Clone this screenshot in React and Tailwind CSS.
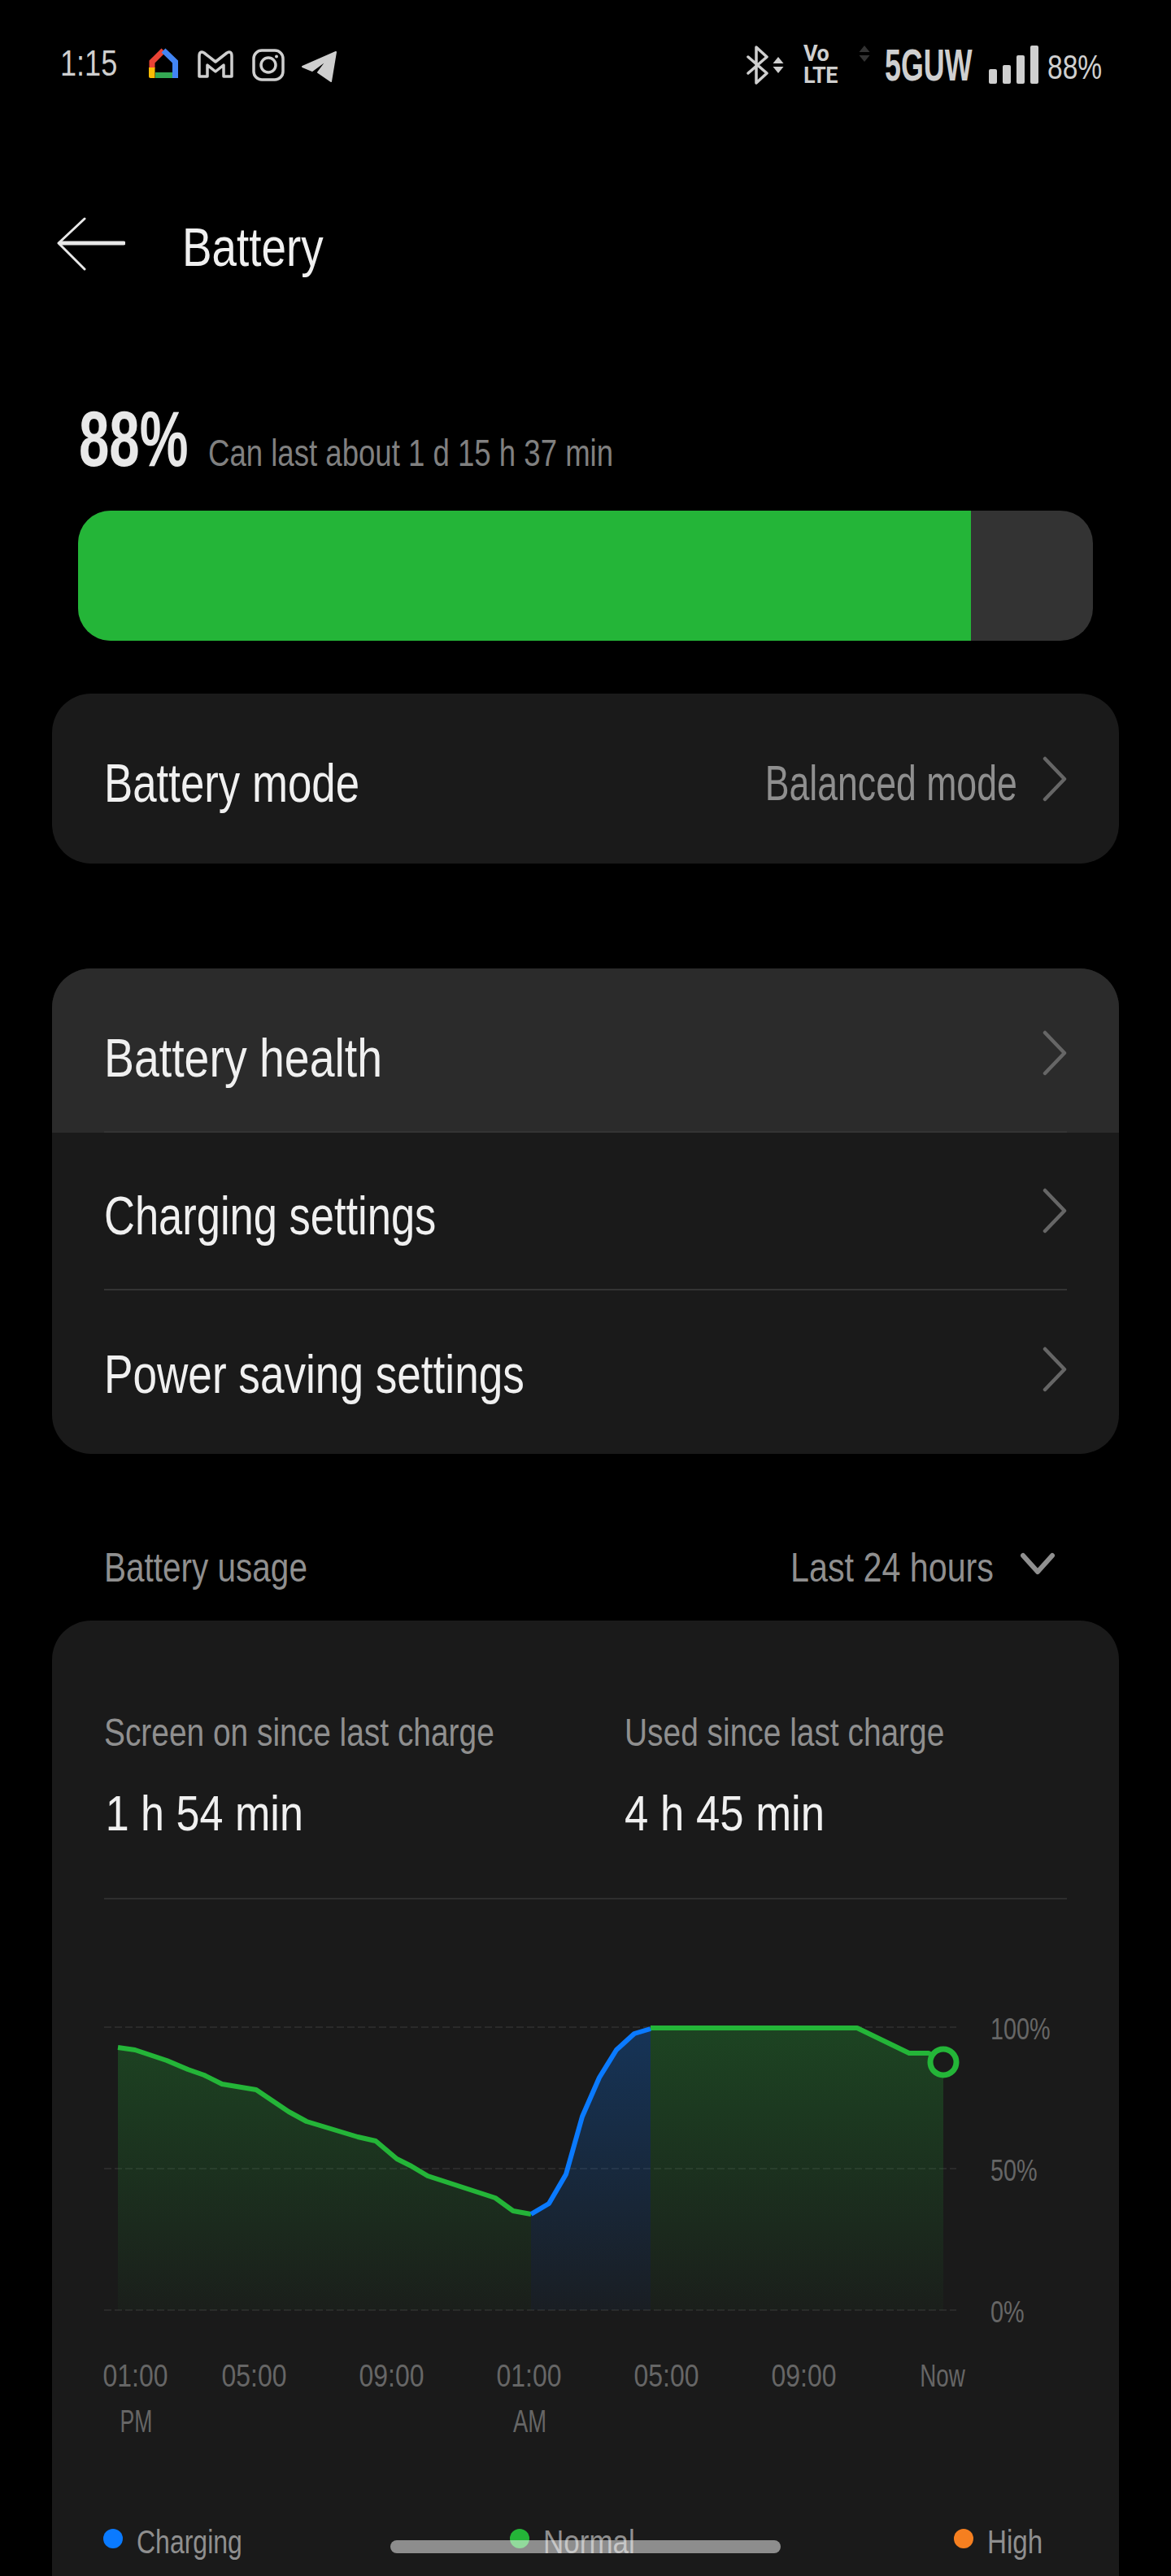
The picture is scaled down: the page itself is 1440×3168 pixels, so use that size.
// the phone font is far narrower than anything installed, so text gets squeezed horizontally
function N({ className, children }) {
  return <span className={"inline-block whitespace-nowrap " + className}>{children}</span>;
}

function Chevron() {
  return (
    <svg width="30" height="56" viewBox="0 0 30 56" fill="none" stroke="#666666" strokeWidth="4.5" strokeLinecap="round" strokeLinejoin="round">
      <path d="M3 3 L27 28 L3 53" />
    </svg>
  );
}

function Row({ label, scale, value, first, last }) {
  return (
    <div className={first ? "bg-[#2b2b2b] pt-[8px]" : ""}>
      <div className={"mx-16 h-[194px] flex items-center justify-between " + (last ? "" : "border-b-2 border-[#343434]")}>
        <N className={"text-[66px] leading-none text-[#f0f0f0] pt-[11px] origin-left " + scale}>{label}</N>
        <div className="flex items-center">
          {value && <N className="text-[62px] leading-none text-[#8f8f8f] mr-[31px] pt-[11px] origin-right scale-x-[0.72]">{value}</N>}
          <Chevron />
        </div>
      </div>
    </div>
  );
}

function Triangles({ color }) {
  return (
    <svg width="14" height="20" viewBox="0 0 14 20" fill={color}>
      <path d="M7 0 L13.5 8 H0.5 Z M7 20 L13.5 12 H0.5 Z" />
    </svg>
  );
}

function StatusBar() {
  return (
    <div className="h-[120px] flex justify-between pl-[74px] pr-[86px] pt-[56px] text-[#cfcfcf]">
      <div className="flex items-start">
        <div className="w-[70px]">
          <N className="text-[44px] leading-[44px] origin-left scale-x-[0.82]">1:15</N>
        </div>
        {/* google home */}
        <svg className="ml-[39px] mt-[2px]" width="37" height="38" viewBox="183 58 37 38" fill="none">
          <path d="M187 84 V76 L201 62" stroke="#ea4335" strokeWidth="7" />
          <path d="M201 62 L215.5 76 V96" stroke="#4285f4" strokeWidth="7" />
          <rect x="191" y="89" width="21" height="7" fill="#34a853" />
          <path d="M183 83 H190.5 V96 H185 Q183 96 183 94 Z" fill="#fbbc04" />
        </svg>
        {/* gmail */}
        <svg className="ml-[23px] mt-[6px]" width="45" height="35" viewBox="243 62 45 35" fill="none" stroke="#cfcfcf" strokeWidth="3.5" strokeLinejoin="round">
          <path d="M245 69 Q245 62 251 65 L265 76 L279 65 Q285 62 285 69 V94 H275 V80 L265 88 L255 80 V94 H245 Z" />
        </svg>
        {/* instagram */}
        <svg className="ml-[22px] mt-[4px]" width="40" height="40" viewBox="0 0 40 40" fill="none" stroke="#cfcfcf" strokeWidth="3.5">
          <rect x="2" y="2" width="36" height="36" rx="10" />
          <circle cx="20" cy="20" r="9" />
          <circle cx="30" cy="9.5" r="2" fill="#cfcfcf" stroke="none" />
        </svg>
        {/* telegram */}
        <svg className="ml-[20px] mt-[6px]" width="45" height="40" viewBox="371 62 45 40" fill="#cfcfcf" stroke="#cfcfcf" strokeWidth="2" strokeLinejoin="round">
          <path d="M373 82 L414 64 L408 100 L392 89 L404 73 L385 87 Z" />
        </svg>
      </div>
      <div className="flex items-start">
        <svg width="28" height="48" viewBox="920 56 28 48" fill="none" stroke="#cfcfcf" strokeWidth="3.5" strokeLinecap="round" strokeLinejoin="round">
          <path d="M922 70 L945 90 L932 102 V58 L945 70 L922 90" />
        </svg>
        <div className="ml-[4px] mt-[14px]"><Triangles color="#cfcfcf" /></div>
        <div className="ml-[24px] -mt-[3px] w-[42px] flex flex-col font-['Roboto',sans-serif] font-bold text-[27px] leading-[27px] -tracking-[0.5px]">
          <span>Vo</span>
          <span>LTE</span>
        </div>
        <div className="ml-[26px]"><Triangles color="#333333" /></div>
        <div className="ml-[18px] w-[106px] h-[48px]">
          <N className="origin-top-left scale-x-[0.64] text-[56px] leading-[48px] font-bold">5GUW</N>
        </div>
        <div className="ml-[22px] h-[47px] flex items-end gap-[7px]">
          <div className="w-[10px] h-[18px] rounded-[2px] bg-[#cfcfcf]"></div>
          <div className="w-[10px] h-[23px] rounded-[2px] bg-[#cfcfcf]"></div>
          <div className="w-[10px] h-[35px] rounded-[2px] bg-[#cfcfcf]"></div>
          <div className="w-[10px] h-[47px] rounded-[2px] bg-[#cfcfcf]"></div>
        </div>
        <div className="ml-[11px] mt-[6px] w-[66px]">
          <N className="text-[42px] leading-[42px] origin-left scale-x-[0.8]">88%</N>
        </div>
      </div>
    </div>
  );
}

function Chart() {
  const green1 = "144,2518 165,2521 204,2534 230,2545 250,2552 272,2563 314,2570 354,2597 376,2609 439,2628 461,2633 487,2655 505,2664 525,2676 608,2703 630,2719 652,2723";
  const blue = "652,2723 674,2710 695,2674 715,2603 736,2555 757,2521 779,2501 799,2495";
  const green2 = "799,2494 1053,2494 1117,2525 1141,2525 1159,2536";
  return (
    <div className="mt-[134px] flex">
      <svg className="overflow-visible" width="1048" height="400" viewBox="127 2470 1048 400" fill="none">
        <defs>
          <linearGradient id="gfill" gradientUnits="userSpaceOnUse" x1="0" y1="2494" x2="0" y2="2841">
            <stop offset="0" stopColor="#24b538" stopOpacity="0.27" />
            <stop offset="1" stopColor="#24b538" stopOpacity="0.03" />
          </linearGradient>
          <linearGradient id="bfill" gradientUnits="userSpaceOnUse" x1="0" y1="2494" x2="0" y2="2841">
            <stop offset="0" stopColor="#0a7aff" stopOpacity="0.27" />
            <stop offset="1" stopColor="#0a7aff" stopOpacity="0.04" />
          </linearGradient>
        </defs>
        <g stroke="#2a2a2a" strokeWidth="2" strokeDasharray="9 4">
          <path d="M127 2493 H1175" />
          <path d="M127 2667 H1175" />
          <path d="M127 2841 H1175" />
        </g>
        <polygon points={`144,2841 ${green1} 652,2841`} fill="url(#gfill)" />
        <polygon points={`652,2841 ${blue} 799,2841`} fill="url(#bfill)" />
        <polygon points={`799,2841 ${green2} 1159,2841`} fill="url(#gfill)" />
        <polyline points={green1} stroke="#24b538" strokeWidth="6" strokeLinejoin="round" />
        <polyline points={green2} stroke="#24b538" strokeWidth="6" strokeLinejoin="round" />
        <polyline points={blue} stroke="#0a7aff" strokeWidth="6" strokeLinejoin="round" />
        <circle cx="1159" cy="2536" r="16" fill="#1a1a1a" stroke="#24b538" strokeWidth="7" />
      </svg>
      <div className="ml-[42px] h-[400px] flex flex-col justify-between items-start text-[36px] leading-[52px] text-[#666666]">
        <N className="origin-left scale-x-[0.8]">100%</N>
        <N className="origin-left scale-x-[0.8]">50%</N>
        <N className="origin-left scale-x-[0.8]">0%</N>
      </div>
    </div>
  );
}

function XLabel({ top, bottom, topScale, bottomScale, className }) {
  return (
    <div className={"w-[80px] flex flex-col items-center " + (className || "")}>
      <N className={"h-[56px] " + (topScale || "scale-x-[0.84]")}>{top}</N>
      {bottom && <N className={bottomScale}>{bottom}</N>}
    </div>
  );
}

function Legend({ color, label, scale }) {
  return (
    <div className="flex items-center">
      <div className={"w-[24px] h-[24px] rounded-full " + color}></div>
      <N className={"ml-[17px] text-[40px] leading-[48px] pt-[9px] text-[#8f8f8f] origin-left " + scale}>{label}</N>
    </div>
  );
}

export default function App() {
  return (
    <div className="relative h-[3168px] overflow-hidden bg-black font-['Liberation_Sans',sans-serif]">
      <StatusBar />

      <div className="mt-[120px] h-[120px] flex items-center pl-[70px]">
        <svg width="84" height="68" viewBox="0 0 84 68" fill="none" stroke="#e8e8e8" strokeLinecap="round" strokeLinejoin="round">
          <path d="M34 3 L2 33 L34 65" strokeWidth="3" />
          <path d="M4 33 H82" strokeWidth="5" />
        </svg>
        <N className="ml-[70px] pt-[7px] text-[66px] leading-none text-[#f0f0f0] origin-left scale-x-[0.83]">Battery</N>
      </div>

      <div className="mt-[130px] h-[100px] pl-[97px] flex items-baseline">
        <N className="w-[159px] text-[96px] leading-[100px] font-bold text-[#e8e8e8] origin-left scale-x-[0.7]">88%</N>
        <N className="text-[46px] leading-none text-[#808080] origin-left scale-x-[0.795]">Can last about 1 d 15 h 37 min</N>
      </div>

      <div className="mt-[38px] mx-24 h-[160px] rounded-[40px] overflow-hidden flex bg-[#333333]">
        <div className="w-[1098px] bg-[#24b538]"></div>
      </div>

      <div className="mt-[65px] mx-16 h-[209px] rounded-[48px] bg-[#1a1a1a] overflow-hidden flex items-center">
        <div className="w-full"><Row label="Battery mode" scale="scale-x-[0.8]" value="Balanced mode" last /></div>
      </div>

      <div className="mt-[129px] mx-16 h-[597px] rounded-[48px] bg-[#1a1a1a] overflow-hidden">
        <Row label="Battery health" scale="scale-x-[0.84]" first />
        <Row label="Charging settings" scale="scale-x-[0.795]" />
        <Row label="Power saving settings" scale="scale-x-[0.805]" last />
      </div>

      <div className="mt-[105px] h-[100px] pl-[128px] pr-[143px] pt-[5px] flex justify-between items-start text-[50px] leading-[60px] text-[#8f8f8f]">
        <N className="origin-left scale-x-[0.81]">Battery usage</N>
        <div className="flex items-start">
          <N className="origin-right scale-x-[0.825]">Last 24 hours</N>
          <svg className="ml-[33px] mt-[11px]" width="42" height="28" viewBox="0 0 42 28" fill="none" stroke="#8f8f8f" strokeWidth="6" strokeLinecap="round" strokeLinejoin="round">
            <path d="M3 4 L21 24 L39 4" />
          </svg>
        </div>
      </div>

      <div className="mx-16 h-[1300px] rounded-t-[48px] bg-[#1a1a1a] px-16 pt-[108px]">
        <div className="grid grid-cols-[640px_1fr] border-b-2 border-[#2e2e2e] h-[235px]">
          <div className="flex flex-col items-start">
            <N className="pt-[2px] text-[48px] leading-[56px] text-[#8f8f8f] origin-left scale-x-[0.81]">Screen on since last charge</N>
            <N className="mt-[36px] pl-[2px] text-[62px] leading-[70px] text-[#f0f0f0] origin-left scale-x-[0.84]">1 h 54 min</N>
          </div>
          <div className="flex flex-col items-start">
            <N className="pt-[2px] text-[48px] leading-[56px] text-[#8f8f8f] origin-left scale-x-[0.81]">Used since last charge</N>
            <N className="mt-[36px] text-[62px] leading-[70px] text-[#f0f0f0] origin-left scale-x-[0.85]">4 h 45 min</N>
          </div>
        </div>

        <Chart />

        <div className="mt-[30px] -ml-[1px] flex text-[38px] leading-[44px] text-[#666666]">
          <XLabel top="01:00" bottom="PM" bottomScale="scale-x-[0.7]" />
          <XLabel top="05:00" className="ml-[66px]" />
          <XLabel top="09:00" className="ml-[89px]" />
          <XLabel top="01:00" bottom="AM" bottomScale="scale-x-[0.72]" className="ml-[89px]" />
          <XLabel top="05:00" className="ml-[89px]" />
          <XLabel top="09:00" className="ml-[89px]" />
          <XLabel top="Now" topScale="scale-x-[0.73]" className="ml-[90px]" />
        </div>

        <div className="mt-[93px] -ml-[1px] grid grid-cols-[500px_546px_1fr]">
          <Legend color="bg-[#0a7aff]" label="Charging" scale="scale-x-[0.8]" />
          <Legend color="bg-[#24b538]" label="Normal" scale="scale-x-[0.875]" />
          <Legend color="bg-[#f57f20]" label="High" scale="scale-x-[0.83]" />
        </div>
      </div>

      <div className="absolute left-[480px] top-[3124px] w-[480px] h-[16px] rounded-full bg-white/50"></div>
    </div>
  );
}
